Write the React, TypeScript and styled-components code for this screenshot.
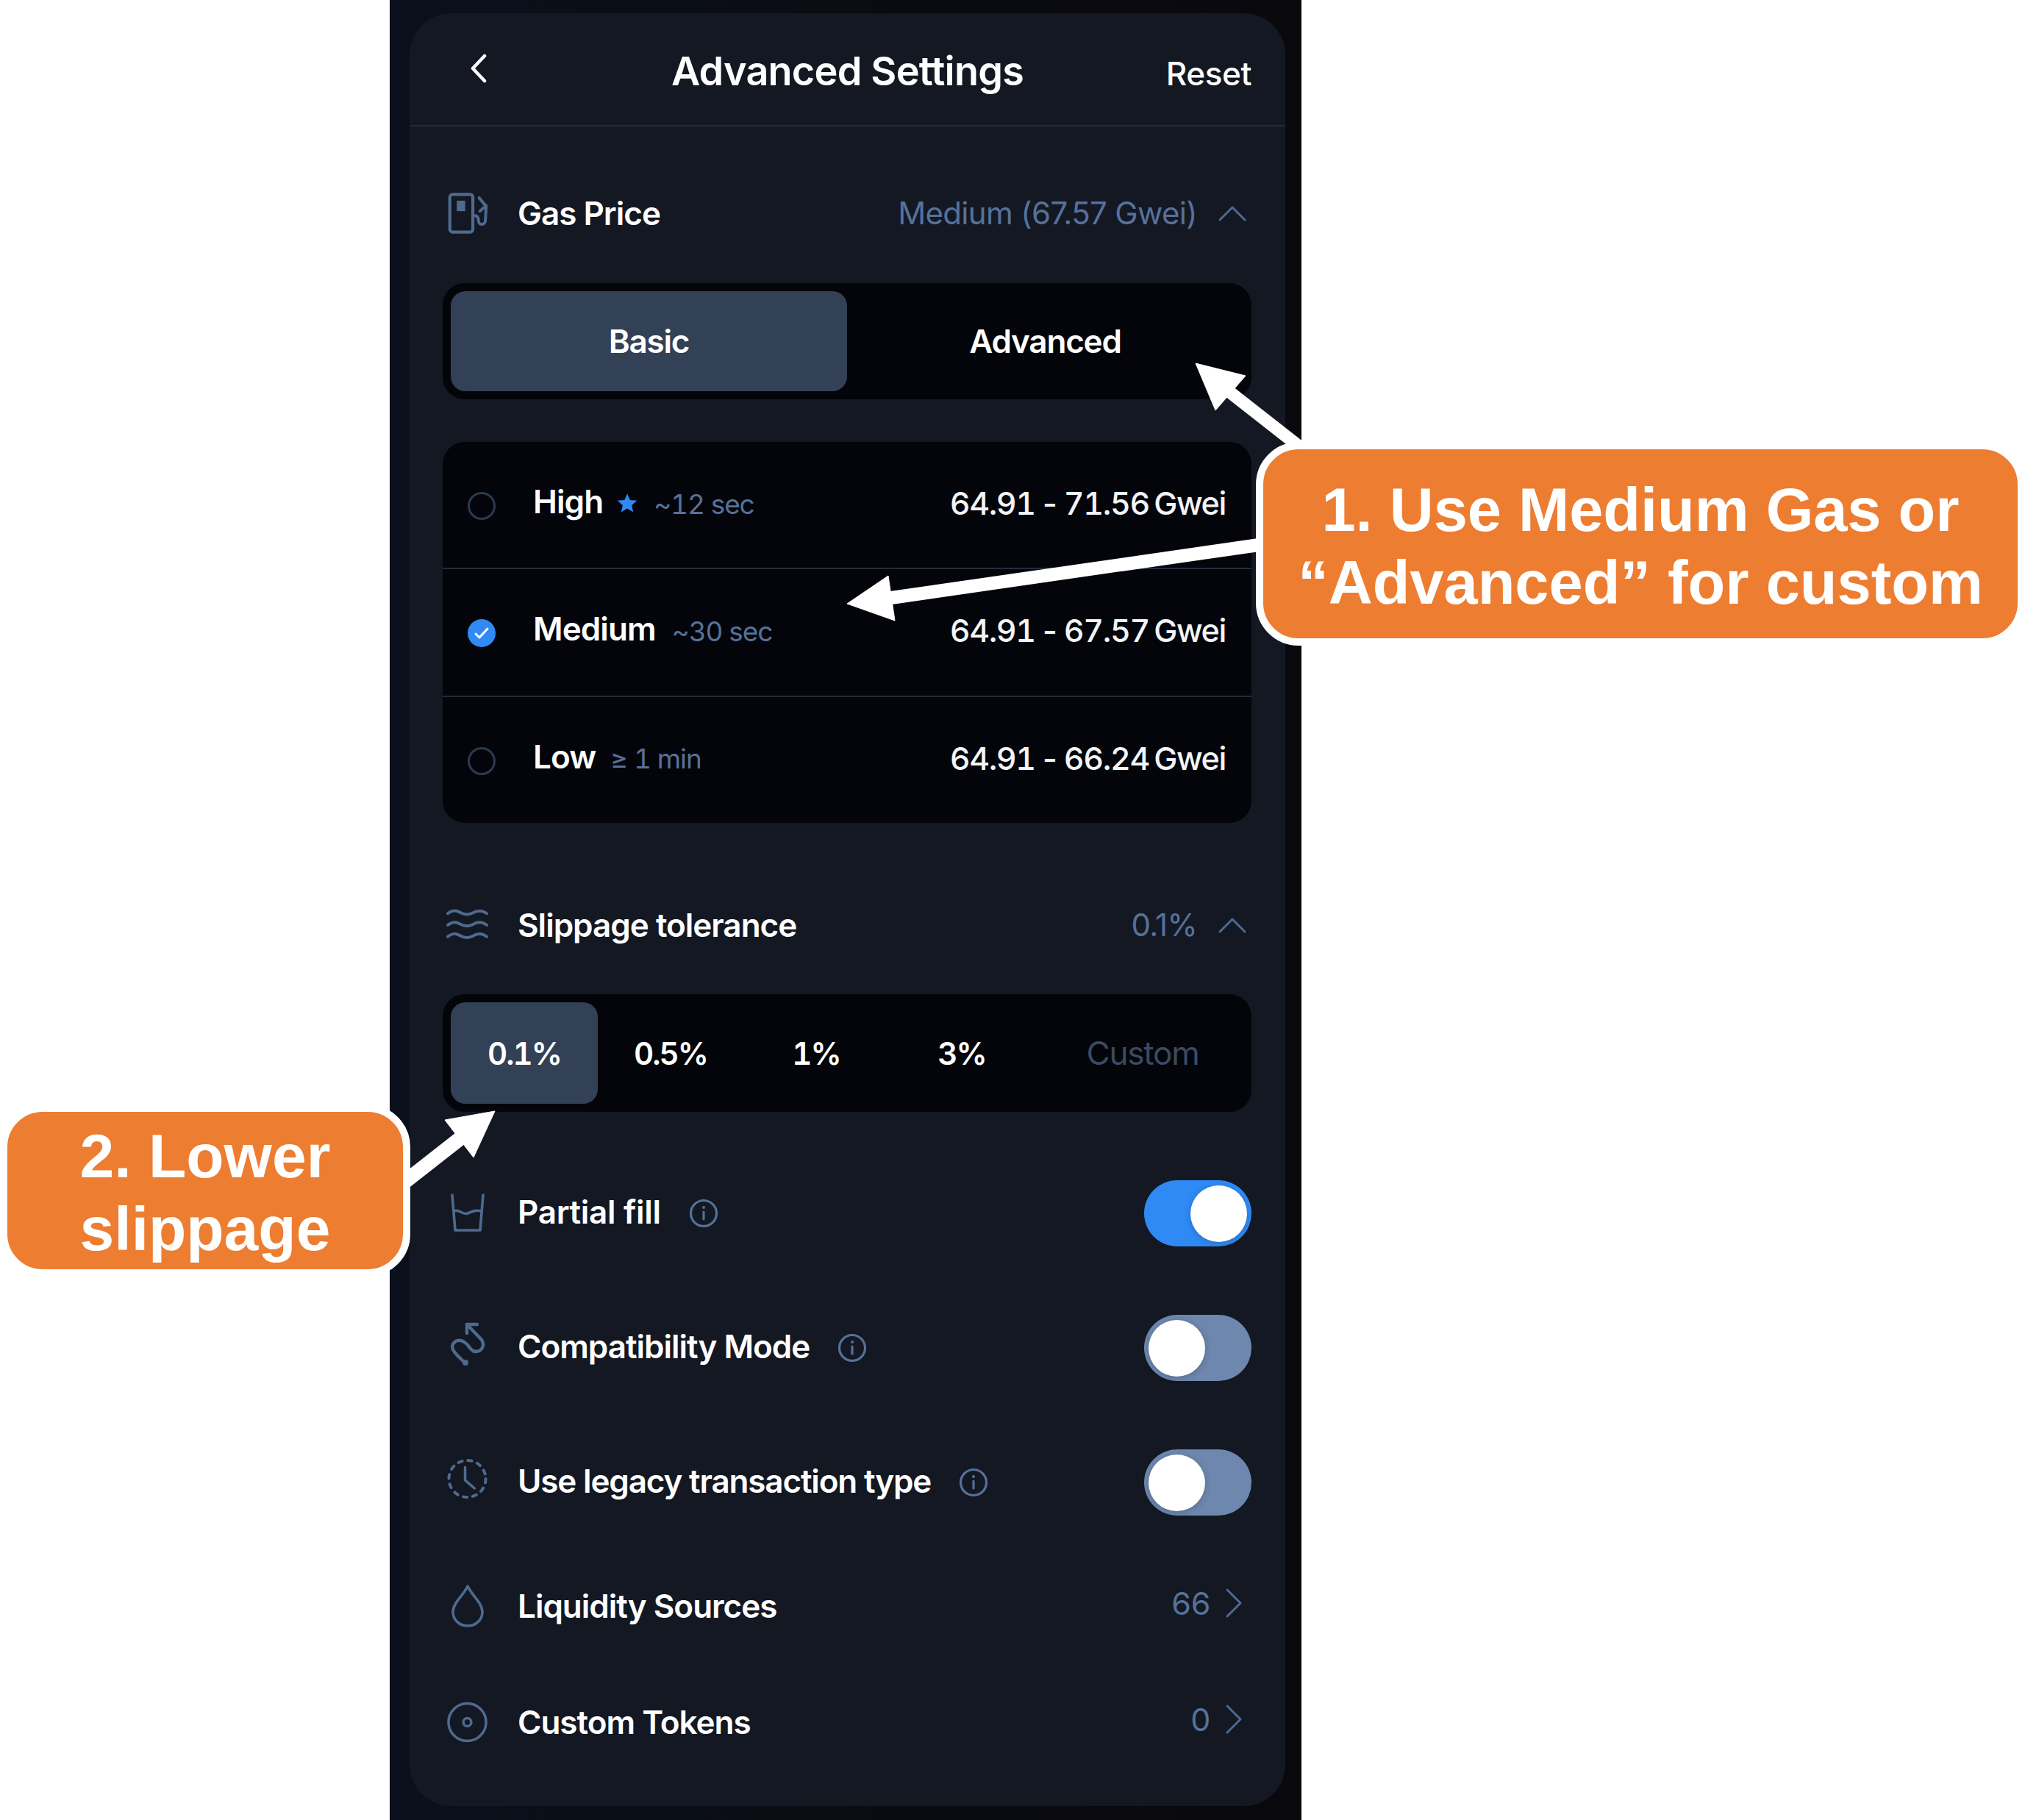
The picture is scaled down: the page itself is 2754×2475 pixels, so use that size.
import React from "react";
import styled, { createGlobalStyle } from "styled-components";

const Global = createGlobalStyle`
  html, body { margin: 0; padding: 0; background: #fff; }
  body { font-family: Inter, "Liberation Sans", sans-serif; }
`;

const Page = styled.div`
  position: relative;
  width: 2754px;
  height: 2475px;
  overflow: hidden;
  background: #fff;
`;
const Phone = styled.div`
  width: 1240px;
  height: 2475px;
  margin-left: 530px;
  box-sizing: border-box;
  padding: 18px 22px 19px 27px;
  background: linear-gradient(90deg, #0a101b 0%, #0a0c12 50%, #09080d 100%);
`;
const Card = styled.div`
  height: 100%;
  display: flex;
  flex-direction: column;
  background: #131822;
  border-radius: 56px;
`;
const Header = styled.header`
  height: 154px;
  flex: none;
  box-sizing: border-box;
  border-bottom: 2px solid #232c3b;
  display: grid;
  grid-template-columns: 1fr auto 1fr;
  align-items: center;
  padding: 0 46px;
  color: #fff;
`;
const BackIcon = styled.svg`
  margin-left: 36px;
  margin-top: -3px;
`;
const Title = styled.h1`
  margin: 0;
  font-size: 54px;
  font-weight: 600;
  letter-spacing: -0.8px;
  color: #fff;
  position: relative;
  top: 2px;
`;
const ResetText = styled.div`
  justify-self: end;
  font-size: 44px;
  font-weight: 500;
  letter-spacing: -0.4px;
  position: relative;
  top: 6px;
`;
const Body = styled.div`
  flex: 1;
  display: flex;
  flex-direction: column;
  padding: 0 46px 0 45px;
`;
const Row = styled.div<{ $top: number; $height?: number }>`
  margin-top: ${(p) => p.$top}px;
  height: ${(p) => p.$height ?? 100}px;
  flex: none;
  display: flex;
  align-items: center;
`;
const IconSlot = styled.div<{ $lift?: number }>`
  width: 57px;
  height: 60px;
  flex: none;
  margin-right: 40px;
  margin-left: 5px;
  display: flex;
  align-items: center;
  justify-content: center;
  color: #4f6a8f;
  position: relative;
  top: ${(p) => -(p.$lift ?? 0)}px;
`;
const Label = styled.span<{ $lift?: number; $spacing?: number }>`
  font-size: 44px;
  font-weight: 600;
  letter-spacing: ${(p) => p.$spacing ?? -1}px;
  color: #fff;
  position: relative;
  top: ${(p) => -(p.$lift ?? 0)}px;
`;
const Value = styled.span`
  margin-left: auto;
  font-size: 42px;
  font-weight: 400;
  letter-spacing: -0.65px;
  color: #56719a;
  position: relative;
  top: -1px;
`;
const Chev = styled.svg`
  flex: none;
  color: #4f6a8f;
`;
const TabBar = styled.div<{ $top: number; $cols: string; $height: number }>`
  margin-top: ${(p) => p.$top}px;
  height: ${(p) => p.$height}px;
  flex: none;
  box-sizing: border-box;
  padding: 11px;
  background: #04050a;
  border-radius: 30px;
  display: grid;
  grid-template-columns: ${(p) => p.$cols};
`;
const Tab = styled.div<{ $active?: boolean; $muted?: boolean; $num?: boolean }>`
  display: flex;
  align-items: center;
  justify-content: center;
  border-radius: 20px;
  background: ${(p) => (p.$active ? "#334156" : "transparent")};
  color: ${(p) => (p.$muted ? "#3c4a60" : "#fff")};
  font-size: ${(p) => (p.$num ? 42 : 44)}px;
  font-weight: ${(p) => (p.$muted ? 400 : 600)};
  font-variant-numeric: tabular-nums;
  letter-spacing: ${(p) => (p.$num ? -1.9 : -1.2)}px;
  padding-left: ${(p) => (p.$muted ? 10 : 0)}px;
`;
const GasList = styled.div`
  margin-top: 58px;
  height: 518px;
  flex: none;
  display: flex;
  flex-direction: column;
  background: #04050a;
  border-radius: 30px;
`;
const GasRow = styled.div<{ $divider?: boolean }>`
  flex: 1;
  display: flex;
  align-items: center;
  box-sizing: border-box;
  padding: 0 35px 5px 34px;
  border-bottom: ${(p) => (p.$divider ? "2px solid #232c3b" : "none")};
`;
const Radio = styled.span<{ $checked?: boolean }>`
  width: 38px;
  height: 38px;
  flex: none;
  box-sizing: border-box;
  border-radius: 50%;
  border: ${(p) => (p.$checked ? "none" : "3px solid #2b3a50")};
  background: ${(p) => (p.$checked ? "#2f8af5" : "transparent")};
  margin-right: 51px;
  display: flex;
  align-items: center;
  justify-content: center;
  position: relative;
  top: 4px;
`;
const GasName = styled.span`
  font-size: 44px;
  font-weight: 600;
  letter-spacing: -0.9px;
  color: #fff;
  position: relative;
  top: -2px;
`;
const Sub = styled.span<{ $gap: number }>`
  margin-left: ${(p) => p.$gap}px;
  font-size: 37px;
  font-weight: 400;
  font-variant-numeric: tabular-nums;
  letter-spacing: -1.1px;
  color: #56719a;
  position: relative;
  top: 1px;
`;
const GasValue = styled.span`
  margin-left: auto;
  font-size: 43px;
  font-weight: 500;
  font-variant-numeric: tabular-nums;
  letter-spacing: -1.35px;
  word-spacing: -4px;
  color: #f2f4f7;
`;
const StarIcon = styled.svg`
  margin-left: 19px;
  flex: none;
`;
const InfoIcon = styled.svg`
  margin-left: 38px;
  flex: none;
  color: #56719a;
`;
const Toggle = styled.div<{ $on?: boolean }>`
  margin-left: auto;
  width: 146px;
  height: 90px;
  flex: none;
  box-sizing: border-box;
  padding: 0 6px;
  border-radius: 45px;
  background: ${(p) => (p.$on ? "#2f8af5" : "#6e87ae")};
  display: flex;
  align-items: center;
  justify-content: ${(p) => (p.$on ? "flex-end" : "flex-start")};
`;
const Knob = styled.span`
  width: 77px;
  height: 77px;
  border-radius: 50%;
  background: #fff;
  box-shadow: 0 2px 8px rgba(20, 30, 50, 0.25);
`;
const Count = styled.span`
  margin-left: auto;
  font-size: 43px;
  letter-spacing: -0.3px;
  color: #56719a;
  position: relative;
  top: -4px;
`;
const Callout = styled.div<{ $x: number; $y: number; $w: number; $h: number; $size: number }>`
  position: absolute;
  left: ${(p) => p.$x}px;
  top: ${(p) => p.$y}px;
  width: ${(p) => p.$w}px;
  height: ${(p) => p.$h}px;
  box-sizing: border-box;
  padding-top: 6px;
  background: #ed7d31;
  border: 10px solid #fff;
  border-radius: 58px;
  display: flex;
  flex-direction: column;
  align-items: center;
  justify-content: center;
  color: #fff;
  font-family: "Liberation Sans", Arial, sans-serif;
  font-size: ${(p) => p.$size}px;
  font-weight: 700;
  line-height: 99px;
  text-align: center;
`;
const ArrowLayer = styled.svg`
  position: absolute;
  left: 0;
  top: 0;
  pointer-events: none;
`;

const ChevUp = () => (
  <Chev width="40" height="24" viewBox="0 0 40 24" fill="none" stroke="currentColor" strokeWidth="3" strokeLinecap="round" strokeLinejoin="round" style={{ marginLeft: 28, marginRight: 6 }}>
    <path d="M3 21 L20 4 L37 21" />
  </Chev>
);
const ChevRight = () => (
  <Chev width="24" height="42" viewBox="0 0 24 42" fill="none" stroke="currentColor" strokeWidth="3" strokeLinecap="round" strokeLinejoin="round" style={{ marginLeft: 20, marginRight: 12, position: "relative", top: -4 }}>
    <path d="M3 3 L21 21 L3 39" />
  </Chev>
);
const Info = () => (
  <InfoIcon width="40" height="40" viewBox="0 0 40 40" fill="none" stroke="currentColor" strokeWidth="3.2">
    <circle cx="20" cy="20" r="17.5" />
    <path d="M20 18 V28" strokeLinecap="round" />
    <circle cx="20" cy="12" r="2" fill="currentColor" stroke="none" />
  </InfoIcon>
);

const svgProps = { fill: "none", stroke: "currentColor", strokeWidth: 3.6, strokeLinecap: "round" as const, strokeLinejoin: "round" as const };

const GasIcon = () => (
  <svg width="60" height="60" viewBox="0 0 60 60" {...svgProps}>
    <rect x="5" y="3" width="33" height="54" rx="4" strokeWidth="4.4" />
    <rect x="15" y="12" width="12" height="15" fill="currentColor" stroke="none" />
    <path d="M38 34 C44 32 46 36 46 40 C46 48 56 48 56 39 L57 20 L47 8" strokeWidth="4.2" />
    <path d="M48 27 L57 19" strokeWidth="4.2" />
  </svg>
);
const WaveIcon = () => (
  <svg width="58" height="44" viewBox="0 0 58 44" {...svgProps} strokeWidth="4">
    <path d="M2 6 C10 0 15 2 20 5 C25 8 32 8 37 5 C42 2 48 0 56 6" />
    <path d="M2 22 C10 16 15 18 20 21 C25 24 32 24 37 21 C42 18 48 16 56 22" />
    <path d="M2 38 C10 32 15 34 20 37 C25 40 32 40 37 37 C42 34 48 32 56 38" />
  </svg>
);
const GlassIcon = () => (
  <svg width="48" height="54" viewBox="0 0 48 54" {...svgProps}>
    <path d="M3 2 L7 50 H41 L45 2" />
    <path d="M5 24 C12 20 17 30 24 27 C31 24 36 22 43 24" />
  </svg>
);
const RouteIcon = () => (
  <svg width="50" height="60" viewBox="0 0 50 60" {...svgProps} strokeWidth="4.4">
    <path d="M24 3 L38 3 M24 3 L24 15" />
    <path d="M24 3 L44 24 C49 32 44 40 36 40 C30 40 28 34 24 30 C18 24 10 22 5 30 C1 38 12 46 22 56" />
    <circle cx="22" cy="55" r="4" fill="currentColor" stroke="none" />
  </svg>
);
const ClockIcon = () => (
  <svg width="58" height="58" viewBox="0 0 58 58" {...svgProps}>
    <circle cx="29" cy="29" r="25.5" strokeDasharray="5.5 7.85" strokeWidth="4" />
    <path d="M26 13 V31 L39 42" />
  </svg>
);
const DropIcon = () => (
  <svg width="48" height="60" viewBox="0 0 48 60" {...svgProps}>
    <path d="M24 3 C18 16 4 26 4 38 C4 49 13 57 24 57 C35 57 44 49 44 38 C44 26 30 16 24 3 Z" />
  </svg>
);
const DiscIcon = () => (
  <svg width="58" height="58" viewBox="0 0 58 58" {...svgProps}>
    <circle cx="29" cy="29" r="26" />
    <circle cx="29" cy="29" r="5.5" />
  </svg>
);

const gasRows = [
  { name: "High", sub: "~12 sec", gap: 22, star: true, value: "64.91 - 71.56 Gwei" },
  { name: "Medium", sub: "~30 sec", gap: 22, checked: true, value: "64.91 - 67.57 Gwei" },
  { name: "Low", sub: "≥ 1 min", gap: 20, value: "64.91 - 66.24 Gwei" },
];

export default function App() {
  return (
    <Page>
      <Global />
      <Phone>
        <Card>
          <Header>
            <BackIcon width="24" height="40" viewBox="0 0 24 40" fill="none" stroke="#fff" strokeWidth="4.5" strokeLinecap="round" strokeLinejoin="round">
              <path d="M20 3 L4 20 L20 37" />
            </BackIcon>
            <Title>Advanced Settings</Title>
            <ResetText>Reset</ResetText>
          </Header>
          <Body>
            <Row $top={68}>
              <IconSlot><GasIcon /></IconSlot>
              <Label>Gas Price</Label>
              <Value>Medium (67.57 Gwei)</Value>
              <ChevUp />
            </Row>
            <TabBar $top={45} $height={158} $cols="539px 1fr">
              <Tab $active>Basic</Tab>
              <Tab>Advanced</Tab>
            </TabBar>
            <GasList>
              {gasRows.map((r, i) => (
                <GasRow key={r.name} $divider={i < 2}>
                  <Radio $checked={r.checked}>
                    {r.checked && (
                      <svg width="22" height="18" viewBox="0 0 22 18" fill="none" stroke="#fff" strokeWidth="3" strokeLinecap="round" strokeLinejoin="round">
                        <path d="M3 10 L8 15 L19 3" />
                      </svg>
                    )}
                  </Radio>
                  <GasName>{r.name}</GasName>
                  {r.star && (
                    <StarIcon width="28" height="28" viewBox="0 0 24 24" fill="#2f8af5">
                      <path d="M12 1 L15.2 8.6 L23.4 9.3 L17.2 14.7 L19.1 22.8 L12 18.5 L4.9 22.8 L6.8 14.7 L0.6 9.3 L8.8 8.6 Z" />
                    </StarIcon>
                  )}
                  <Sub $gap={r.gap}>{r.sub}</Sub>
                  <GasValue>{r.value}</GasValue>
                </GasRow>
              ))}
            </GasList>
            <Row $top={89}>
              <IconSlot><WaveIcon /></IconSlot>
              <Label>Slippage tolerance</Label>
              <Value>0.1%</Value>
              <ChevUp />
            </Row>
            <TabBar $top={44} $height={160} $cols="200px 198px 198px 198px 1fr">
              <Tab $active $num>0.1%</Tab>
              <Tab $num>0.5%</Tab>
              <Tab $num>1%</Tab>
              <Tab $num>3%</Tab>
              <Tab $muted>Custom</Tab>
            </TabBar>
            <Row $top={93} $height={90}>
              <IconSlot><GlassIcon /></IconSlot>
              <Label $lift={2} $spacing={-0.3}>Partial fill</Label>
              <Info />
              <Toggle $on><Knob /></Toggle>
            </Row>
            <Row $top={93} $height={90}>
              <IconSlot $lift={5}><RouteIcon /></IconSlot>
              <Label $lift={2}>Compatibility Mode</Label>
              <Info />
              <Toggle><Knob /></Toggle>
            </Row>
            <Row $top={93} $height={90}>
              <IconSlot $lift={5}><ClockIcon /></IconSlot>
              <Label $lift={2} $spacing={-1.15}>Use legacy transaction type</Label>
              <Info />
              <Toggle><Knob /></Toggle>
            </Row>
            <Row $top={78} $height={90}>
              <IconSlot><DropIcon /></IconSlot>
              <Label>Liquidity Sources</Label>
              <Count>66</Count>
              <ChevRight />
            </Row>
            <Row $top={68} $height={90}>
              <IconSlot><DiscIcon /></IconSlot>
              <Label>Custom Tokens</Label>
              <Count>0</Count>
              <ChevRight />
            </Row>
          </Body>
        </Card>
      </Phone>
      <ArrowLayer width="2754" height="2475" viewBox="0 0 2754 2475">
        <g fill="#fff" stroke="#fff">
          <path d="M1768 608 L1662 525" strokeWidth="17" fill="none" />
          <polygon points="1626,494 1694,511 1653,558" strokeWidth="1" />
          <path d="M1712 741 L1205 814" strokeWidth="18" fill="none" />
          <polygon points="1152,821 1208,783 1217,844" strokeWidth="1" />
          <path d="M552 1606 L626 1548" strokeWidth="20" fill="none" />
          <polygon points="673,1511 605,1523 644,1574" strokeWidth="1" />
        </g>
      </ArrowLayer>
      <Callout $x={1708} $y={601} $w={1046} $h={277} $size={83}>
        <div>1. Use Medium Gas or</div>
        <div>“Advanced” for custom</div>
      </Callout>
      <Callout $x={0} $y={1502} $w={558} $h={234} $size={84}>
        <div>2. Lower</div>
        <div>slippage</div>
      </Callout>
    </Page>
  );
}
